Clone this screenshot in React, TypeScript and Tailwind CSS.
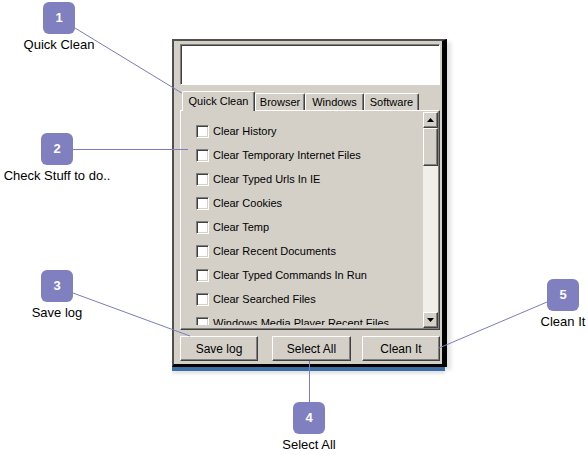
import React from "react";

const options = [
  "Clear History",
  "Clear Temporary Internet Files",
  "Clear Typed Urls In IE",
  "Clear Cookies",
  "Clear Temp",
  "Clear Recent Documents",
  "Clear Typed Commands In Run",
  "Clear Searched Files",
  "Windows Media Player Recent Files",
];

const tabs = [
  { label: "Quick Clean", width: "w-[73px]", active: true },
  { label: "Browser", width: "w-[50px]", active: false },
  { label: "Windows", width: "w-[59px]", active: false },
  { label: "Software", width: "w-[55px]", active: false },
];

const raised =
  "border-t border-l border-white border-r border-b border-r-[#404040] border-b-[#404040] shadow-[inset_-1px_-1px_#808080]";

const Callout = ({
  n,
  label,
  className,
}: {
  n: number;
  label: string;
  className: string;
}) => (
  <div className={`absolute flex w-[120px] flex-col items-center ${className}`}>
    <div className="flex h-[32px] w-[32px] items-center justify-center rounded-[6px] bg-[#8080c0] text-[13px] font-bold text-white">
      {n}
    </div>
    <div className="mt-[3px] whitespace-nowrap text-[13px] leading-[16px] text-black">
      {label}
    </div>
  </div>
);

const Arrow = ({ down }: { down?: boolean }) => (
  <div className={`flex h-[16px] items-center justify-center bg-[#d4d0c8] ${raised}`}>
    <svg width="7" height="4" viewBox="0 0 7 4">
      {down ? (
        <polygon points="0,0 7,0 3.5,4" fill="#000" />
      ) : (
        <polygon points="0,4 7,4 3.5,0" fill="#000" />
      )}
    </svg>
  </div>
);

const Checkbox = () => (
  <div className="h-[13px] w-[13px] shrink-0 border-t border-l border-[#808080] border-b border-r border-b-white border-r-white bg-white shadow-[inset_1px_1px_#404040,inset_-1px_-1px_#d4d0c8]" />
);

export default function App() {
  return (
    <div className="relative h-[455px] w-[588px] overflow-hidden bg-white font-['Liberation_Sans',Arial,sans-serif]">
      <div className="ml-[172px] w-[275px] pt-[39px]">
        <div className="flex h-[328px] flex-col border-t-2 border-l-2 border-[#505050] border-r-[5px] border-r-black border-b-[3px] border-b-black bg-[#d4d0c8] pt-[3px] pr-[2px] pl-[6px] shadow-[4px_3px_4px_rgba(0,0,0,0.12)]">
          <div className="h-[41px] border-t border-l border-[#808080] border-r border-b border-r-white border-b-white bg-white shadow-[inset_1px_1px_#404040]" />

          <div className="mt-[6px] flex h-[19px] items-end pl-[2px]">
            {tabs.map((tab) => (
              <div
                key={tab.label}
                className={`flex ${tab.width} items-center justify-center rounded-t-[2px] border-t border-l border-white border-r border-r-[#404040] bg-[#d4d0c8] text-[11px] text-black shadow-[inset_-1px_0_#808080] ${
                  tab.active ? "relative z-10 -mb-px h-[20px]" : "h-[17px]"
                }`}
              >
                {tab.label}
              </div>
            ))}
          </div>

          <div className={`flex h-[220px] overflow-hidden bg-[#d4d0c8] ${raised}`}>
            <div className="mb-[4px] flex flex-1 flex-col overflow-hidden pt-[8px] pl-[15px]">
              {options.map((opt) => (
                <div key={opt} className="flex h-[24px] shrink-0 items-center gap-[4px]">
                  <Checkbox />
                  <span className="whitespace-nowrap text-[11px] text-black">{opt}</span>
                </div>
              ))}
            </div>
            <div className="my-[1px] mr-[1px] flex w-[15px] flex-col bg-[#f1efea]">
              <Arrow />
              <div className={`h-[38px] bg-[#d4d0c8] ${raised}`} />
              <div className="flex-1" />
              <Arrow down />
            </div>
          </div>

          <div className="mt-[6px] flex justify-between">
            {["Save log", "Select All", "Clean It"].map((b, i) => (
              <div
                key={b}
                className={`flex h-[25px] items-center justify-center bg-[#d4d0c8] text-[12px] text-black ${raised} ${
                  i === 1 ? "ml-[13px] mr-[10px] w-[79px]" : "w-[78px]"
                }`}
              >
                {b}
              </div>
            ))}
          </div>
        </div>
        <div className="mr-[2px] h-[4px] bg-[#3a6ea5] shadow-[0_3px_3px_rgba(0,0,0,0.1)]" />
      </div>

      <svg className="pointer-events-none absolute inset-0" width="588" height="455">
        <g stroke="#7c7cbe" strokeWidth="1" fill="none">
          <line x1="75" y1="28" x2="185" y2="95" />
          <line x1="73" y1="149.5" x2="188" y2="149.5" />
          <line x1="73" y1="293" x2="190" y2="336" />
          <line x1="309.5" y1="361" x2="309.5" y2="402" />
          <line x1="547" y1="302" x2="439" y2="348" />
        </g>
      </svg>

      <Callout n={1} label="Quick Clean" className="top-[2px] left-[-1px]" />
      <Callout n={2} label="Check Stuff to do.." className="top-[133px] left-[-3px]" />
      <Callout n={3} label="Save log" className="top-[270px] left-[-3px]" />
      <Callout n={4} label="Select All" className="top-[402px] left-[249px]" />
      <Callout n={5} label="Clean It" className="top-[279px] left-[503px]" />
    </div>
  );
}
